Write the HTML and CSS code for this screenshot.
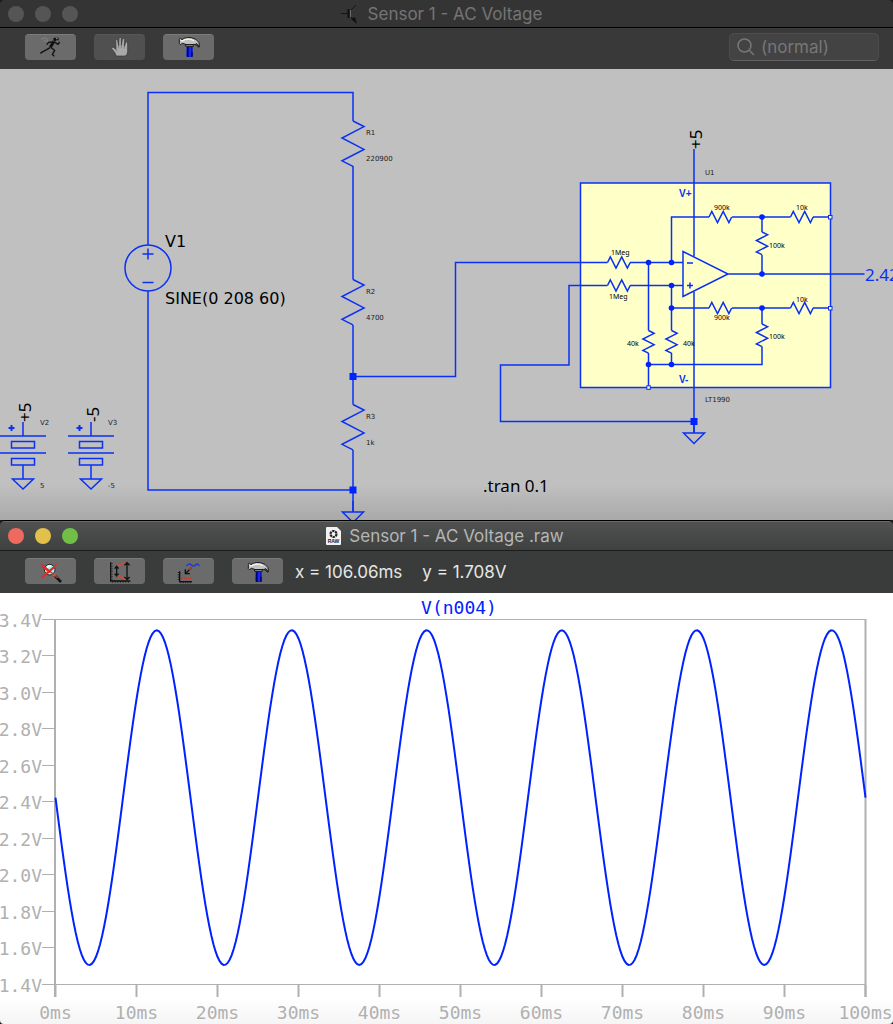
FILE: index.html
```html
<!DOCTYPE html>
<html lang="en">
<head>
<meta charset="utf-8">
<meta name="viewport" content="width=device-width, initial-scale=1">
<title>Sensor 1 - AC Voltage</title>
<link rel="stylesheet" href="styles.css">
</head>
<body>
<svg class="defs" aria-hidden="true">
  <defs>
    <path id="resistor" d="M0 0L11 5.6L-11 17L11 28.4L-11 39.8L0 45.4"/>
    <path id="resistor-s" d="M0 0L5.6 2.8L-5.6 8.5L5.6 14.2L-5.6 19.9L0 22.7"/>
    <path id="resistor-h" d="M0 0L2.8 -5.6L8.5 5.6L14.2 -5.6L19.9 5.6L22.7 0"/>
    <path id="ground" d="M0 -11V0M-10.5 0H10.5L0 10.5Z"/>
    <g id="battery">
      <path d="M0 -14V0M-23 0H23M-11.5 5.5H11.5V12H-11.5ZM-23 17H23M-11.5 22.5H11.5V29H-11.5ZM0 29V43M-10.5 43H10.5L0 53Z"/>
      <path d="M-14.500 -8H-8.500M-11.500 -11V-5" stroke-width="2"/>
    </g>
    <g id="hammer">
      <path d="M23 27H41V57Q41 60 38 60H26Q22 60 22 57Z" fill="#0713d8"/>
      <path d="M26 28V60M39 44V59" stroke="#000466" stroke-width="4"/>
      <path d="M33 30V59" stroke="#2840f5" stroke-width="3"/>
      <path d="M1 7Q1 3 4 4L9 8L16 4Q25 0 37 2Q54 5 60 17L61 30L56 29L51 23L43 22V28H20V22L10 19L4 23L1 20Z" fill="#bfc2bf" stroke="#1b1b1b" stroke-width="3"/>
      <path d="M5 10L10 12L17 8Q31 4 45 11" fill="none" stroke="#f4f4f4" stroke-width="4"/>
      <path d="M18 23H43M51 19L60 29" stroke="#1b1b1b" stroke-width="4"/>
    </g>
  </defs>
</svg>

<main class="desktop">
  <section class="window window-schematic">
    <header class="titlebar">
      <div class="lights"><span class="light"></span><span class="light"></span><span class="light"></span></div>
      <h1 class="title">
        <svg class="title-icon" viewBox="0 0 20 20" aria-hidden="true"><path d="M0 9.500H7M9 7L15 1M9 12L14 17" fill="none" stroke="#141414"/><path d="M7.500 5V14" stroke="#111" stroke-width="2"/><path d="M9.500 6V13" stroke="#6a6a6a"/><path d="M10 15L16 20L14 13Z" fill="#111"/></svg>
        Sensor 1 - AC Voltage
      </h1>
    </header>
    <div class="toolbar">
      <button class="tool" type="button" aria-label="Run">
        <svg class="icon" viewBox="0 0 60 60"><path d="M0 7Q8 0 16 4Q22 7 20 14M8 13Q13 8 17 13" fill="none" stroke="#858585" stroke-width="3"/><path d="M38 2H53V10H46L42 14L37 9Z" fill="#111"/><path d="M45 5H50" stroke="#999" stroke-width="3"/><path d="M39 13L28 31" stroke="#111" stroke-width="9"/><path d="M42 16L51 22L56 15M34 15L23 16L17 23M27 32L17 38L0 47V50M29 31L41 40L34 53L40 58" fill="none" stroke="#111" stroke-width="4"/></svg>
      </button>
      <button class="tool" type="button" aria-label="Halt" disabled>
        <svg class="icon" viewBox="0 0 60 60"><path d="M19 57L14 46L5 35Q4 29 10 31L18 37L17 10Q19 5 23 10L26 26L27 4Q31 -1 34 4V25L37 7Q41 2 44 7L43 28L47 16Q52 12 53 18V44Q53 53 46 57Z" fill="#a9a9a9" stroke="#343434" stroke-width="2"/><path d="M26 25V34M34 25V34M43 27V35M18 37L22 43" fill="none" stroke="#707070" stroke-width="2"/></svg>
      </button>
      <button class="tool" type="button" aria-label="Control panel"><svg class="icon" viewBox="0 0 60 60"><use href="#hammer"/></svg></button>
      <label class="search">
        <svg class="search-icon" viewBox="0 0 18 18" aria-hidden="true"><circle cx="7.500" cy="7.500" r="6.500"/><path d="M12 12L17 17"/></svg>
        <input class="search-field" type="search" placeholder="(normal)" aria-label="Search">
      </label>
    </div>
    <svg class="schematic" viewBox="0 69 893 451" role="img" aria-label="Circuit schematic">
      <defs><linearGradient id="shade" x1="0" y1="0" x2="0" y2="1"><stop offset="0" stop-color="#000" stop-opacity="0"/><stop offset="1" stop-color="#000" stop-opacity=".12"/></linearGradient></defs>
      <rect x="0" y="485" width="893" height="35" fill="url(#shade)"/>
      <g class="wire">
        <path d="M148 245V92.500H353V121M353 166V279.500M353 325V404.500M353 450V512M148 291V490H353M353 376.500H455.500V262.500H580"/>
        <circle cx="148" cy="268" r="23"/>
        <path d="M142.500 254H153.500M148 248.500V259.500M142.500 282.500H153.500"/>
        <use href="#resistor" x="353" y="121"/>
        <use href="#resistor" x="353" y="279.500"/>
        <use href="#resistor" x="353" y="404.500"/>
        <use href="#ground" x="353" y="512"/>
        <use href="#battery" x="23" y="436"/>
        <use href="#battery" x="91" y="436"/>
        <path d="M580 285.500H569V365H500.500V421.500H694"/>
        <use href="#ground" x="694" y="433"/>
      </g>
      <rect class="chip" x="580.500" y="183" width="250" height="204.500"/>
      <g class="wire">
        <path d="M694 149V256.500M694 291.500V433"/>
        <path d="M580 262.500H607.500M630 262.500H683M580 285.500H607.500M630 285.500H683"/>
        <path d="M671.500 262.500V217H709M732 217H790.500M813 217H830M762 217V232M762 255V274"/>
        <path d="M683 251.500L728 274L683 296.500ZM728 274H864.500M687 263H693M687 285.500H693M690 282.500V288.500"/>
        <path d="M648.500 262.500V330.500M648.500 353V387M671.500 285.500V330.500M671.500 353V364.500M671.500 308H709M732 308H790.500M813 308H830M762 308V324M762 346.500V364.500H648.500"/>
        <use href="#resistor-h" x="607.500" y="262.500"/>
        <use href="#resistor-h" x="607.500" y="285.500"/>
        <use href="#resistor-h" x="709" y="217"/>
        <use href="#resistor-h" x="790.500" y="217"/>
        <use href="#resistor-h" x="709" y="308"/>
        <use href="#resistor-h" x="790.500" y="308"/>
        <use href="#resistor-s" x="762" y="232"/>
        <use href="#resistor-s" x="762" y="324"/>
        <use href="#resistor-s" x="648.500" y="330.500"/>
        <use href="#resistor-s" x="671.500" y="330.500"/>
      </g>
      <g class="pin">
        <rect x="828.500" y="215.500" width="3.500" height="3.500"/>
        <rect x="828.500" y="306.500" width="3.500" height="3.500"/>
        <rect x="646.800" y="385.800" width="3.500" height="3.500"/>
      </g>
      <g class="node">
        <rect x="349.500" y="373" width="7" height="7"/>
        <rect x="349.500" y="486.500" width="7" height="7"/>
        <rect x="690.500" y="418" width="7" height="7"/>
        <circle cx="648.500" cy="262.500" r="2.800"/><circle cx="671.500" cy="262.500" r="2.800"/>
        <circle cx="671.500" cy="285.500" r="2.800"/><circle cx="671.500" cy="308" r="2.800"/>
        <circle cx="648.500" cy="364.500" r="2.800"/><circle cx="671.500" cy="364.500" r="2.800"/>
        <circle cx="762" cy="217" r="2.800"/><circle cx="762" cy="274" r="2.800"/><circle cx="762" cy="308" r="2.800"/>
      </g>
      <g class="label">
        <text x="165" y="247">V1</text>
        <text x="165" y="304">SINE(0 208 60)</text>
      </g>
      <g class="label-net">
        <text x="483" y="492">.tran 0.1</text>
        <text transform="translate(702 149) rotate(-90)">+5</text>
        <text transform="translate(31 422) rotate(-90)">+5</text>
        <text transform="translate(99 422) rotate(-90)">-5</text>
        <text x="865" y="281" class="blue">2.42</text>
      </g>
      <g class="label-part">
        <text x="366" y="135">R1</text><text x="366" y="161">220900</text>
        <text x="366" y="294">R2</text><text x="366" y="320">4700</text>
        <text x="366" y="419">R3</text><text x="366" y="445">1k</text>
        <text x="40" y="425">V2</text><text x="40" y="488">5</text>
        <text x="108" y="425">V3</text><text x="108" y="488">-5</text>
        <text x="705" y="175">U1</text><text x="705" y="402">LT1990</text>
      </g>
      <g class="label-value">
        <text x="611" y="255">1Meg</text><text x="609" y="299">1Meg</text>
        <text x="714" y="210">900k</text><text x="714" y="320">900k</text>
        <text x="796" y="210">10k</text><text x="796" y="302">10k</text>
        <text x="769" y="248">100k</text><text x="769" y="339">100k</text>
        <text x="627" y="346">40k</text><text x="683" y="346">40k</text>
      </g>
      <g class="label-supply"><text x="679" y="197">V+</text><text x="679" y="383">V-</text></g>
    </svg>
  </section>

  <section class="window window-plot">
    <header class="titlebar">
      <div class="lights"><span class="light light-close"></span><span class="light light-min"></span><span class="light light-max"></span></div>
      <h2 class="title">
        <svg class="title-icon title-icon-doc" viewBox="0 0 17 20" aria-hidden="true"><path d="M2 1H12L16 5V18Q16 19 15 19H2Q1 19 1 18V2Q1 1 2 1Z" fill="#f2f2f2"/><circle cx="8.500" cy="8" r="3" fill="none" stroke="#222" stroke-width="2.200" stroke-dasharray="2.400 .7"/><text class="doc-type" x="8.500" y="17" text-anchor="middle">RAW</text></svg>
        Sensor 1 - AC Voltage .raw
      </h2>
    </header>
    <div class="toolbar">
      <button class="tool" type="button" aria-label="Zoom to fit">
        <svg class="icon" viewBox="0 0 60 60"><path d="M41 41L60 60" stroke="#111" stroke-width="8"/><path d="M38 37L43 42" stroke="#ddd" stroke-width="5"/><circle cx="26" cy="23" r="16" fill="#a5eef0" stroke="#262626" stroke-width="3"/><path d="M16 26Q17 12 29 12" fill="none" stroke="#fff" stroke-width="4"/><path d="M0 7L9 12L50 48M1 13L28 31M47 7L35 17L1 47M42 15L6 45" fill="none" stroke="#e22a22" stroke-width="4"/></svg>
      </button>
      <button class="tool" type="button" aria-label="Autorange">
        <svg class="icon" viewBox="0 0 60 60"><path d="M2 1V57H61" fill="none" stroke="#111" stroke-width="4"/><path d="M6 3V53M6 60H60" fill="none" stroke="#111" stroke-width="3" stroke-dasharray="3 5"/><path d="M20 12V42M14 20L20 13L26 20M14 35L20 42L26 35M51 2V53M43 10L51 2L59 10M43 45L51 53L59 45" fill="none" stroke="#111" stroke-width="4"/><path d="M23 11L47 1M23 41L47 53" stroke="#e0452c" stroke-width="4"/></svg>
      </button>
      <button class="tool" type="button" aria-label="Add trace">
        <svg class="icon" viewBox="0 0 60 60"><path d="M22 12Q30 2 37 9T50 9T61 12" fill="none" stroke="#1a35d8" stroke-width="4"/><path d="M37 17L19 35M19 22V35H33" fill="none" stroke="#111" stroke-width="4"/><path d="M2 28V59H39" fill="none" stroke="#111" stroke-width="4"/><path d="M-2 30V57M4 62H38" stroke="#111" stroke-width="3" stroke-dasharray="3 4"/><path d="M6 52Q13 43 20 49T39 46M30 23L37 17" fill="none" stroke="#d23a2c" stroke-width="4"/></svg>
      </button>
      <button class="tool" type="button" aria-label="Control panel"><svg class="icon" viewBox="0 0 60 60"><use href="#hammer"/></svg></button>
      <p class="readout"><span>x = 106.06ms</span><span>y = 1.708V</span></p>
    </div>
    <svg class="plot" viewBox="0 593 893 431" role="img" aria-label="V(n004) against time">
      <text class="trace-name" x="459" y="614" text-anchor="middle">V(n004)</text>
      <g class="axes"><path d="M42 619.500H866M42 984.500H866"/><path d="M55 619V997M865.500 619V997" class="axis-bold"/></g>
      <g id="scale" class="scale"></g>
      <path id="trace" class="trace"/>
    </svg>
  </section>
</main>
<script src="script.js"></script>
</body>
</html>
```

FILE: styles.css
```css
* { box-sizing: border-box; }

body {
  margin: 0;
  background: #1c1c1c;
  font-family: Inter, "Liberation Sans", sans-serif;
}

.defs { position: absolute; width: 0; height: 0; }

.desktop { display: flex; flex-direction: column; }

.window { overflow: hidden; }
.window-schematic { background: #393939; border-radius: 5px 5px 0 0; }
.window-plot { background: #3a3c3b; border-top: 1px solid #000; border-radius: 5px 5px 4px 4px; }

.titlebar {
  display: grid;
  grid-template-columns: 1fr auto 1fr;
  align-items: center;
  height: 28px;
  padding: 0 18px 0 8px;
  background: #343434;
  border-bottom: 1px solid #000;
}
.window-plot .titlebar {
  height: 30px;
  padding-right: 12px;
  background: linear-gradient(#505251, #3f4140);
  border-top: 1px solid #6a6c6b;
  border-bottom-color: #1c1c1c;
}

.lights { display: flex; gap: 11px; }
.light { width: 16px; height: 16px; border-radius: 50%; background: #555; }
.light-close { background: #ee6a5f; }
.light-min { background: #e1c04c; }
.light-max { background: #71bf46; }

.title {
  display: flex;
  align-items: center;
  gap: 7px;
  margin: 0;
  color: #747474;
  font-size: 17px;
  font-weight: 400;
  line-height: 24px;
  white-space: nowrap;
}
.window-plot .title { color: #b5b6b5; }
.title-icon { width: 20px; height: 20px; }
.title-icon-doc { width: 17px; }
.doc-type { font: 700 5px "Liberation Sans", sans-serif; fill: #222; }

.toolbar {
  display: flex;
  align-items: center;
  gap: 18px;
  height: 41px;
  padding: 0 14px 0 25px;
}
.window-schematic .toolbar { padding-bottom: 4px; }
.window-plot .toolbar { height: 42px; }
.window-plot .tool { margin-bottom: 2px; }

.tool {
  display: flex;
  align-items: center;
  justify-content: center;
  width: 51px;
  height: 26px;
  padding: 0;
  border: 0;
  border-top: 1px solid #7b7b7b;
  border-radius: 4px;
  background: #6b6b6b;
}
.tool:disabled { background: #505050; border-top-color: #565656; }
.icon { width: 20px; height: 20px; overflow: visible; }

.search {
  display: flex;
  align-items: center;
  gap: 6px;
  width: 150px;
  height: 28px;
  margin-left: auto;
  padding: 0 7px;
  border: 1px solid #4d4d4d;
  border-bottom-color: #626262;
  border-radius: 5px;
  background: #434343;
}
.search-icon { flex: none; width: 18px; height: 18px; fill: none; stroke: #777; stroke-width: 1.5px; }
.search-field {
  width: 100%;
  min-width: 0;
  padding: 0;
  border: 0;
  outline: 0;
  background: transparent;
  color: #777;
  font: 400 17px Inter, "Liberation Sans", sans-serif;
}
.search-field::placeholder { color: #777; opacity: 1; }

.readout {
  display: flex;
  gap: 20px;
  margin: 0 0 0 -6px;
  color: #e6e6e6;
  font-size: 17px;
  font-weight: 400;
  white-space: nowrap;
}

.schematic { display: block; width: 100%; height: auto; background: #c0c0c0; }
.wire { fill: none; stroke: #0a30f5; stroke-width: 1.5px; }
.chip { fill: #ffffc8; stroke: #0a30f5; stroke-width: 1.5px; }
.pin { fill: #ffffc8; stroke: #0a30f5; stroke-width: 1px; }
.node { fill: #0022ff; }

.label { font: 16px "DejaVu Sans", sans-serif; }
.label-net { font: 17px "Noto Sans", sans-serif; }
.blue { fill: #0a30f5; }
.label-part { font: 7px "DejaVu Sans", sans-serif; fill: #222; }
.label-value { font: 7px "Noto Sans", sans-serif; }
.label-supply { font: 700 10px "Liberation Sans", sans-serif; fill: #0a30f5; }

.plot {
  display: block;
  width: 100%;
  height: auto;
  background: linear-gradient(#fff 94%, #f5f5f5);
  font: 18px "DejaVu Sans Mono", monospace;
}
.trace-name { fill: #0022ff; }
.axes, .scale { stroke: #b0b0b0; fill: none; stroke-width: 1px; }
.axis-bold, .scale-time path { stroke-width: 2px; }
.scale text { fill: #b0b0b0; stroke: none; }
.trace { fill: none; stroke: #0022ff; stroke-width: 2px; }
```

FILE: script.js
```js
const NS = "http://www.w3.org/2000/svg";
const plot = { left: 55.5, right: 865.5, top: 619.5, bottom: 984.5 };
const volts = { min: 1.4, max: 3.4, step: 0.2 };
const wave = { offset: 2.424, amplitude: 0.917, cycles: 6 };

const toY = (v) => plot.bottom - ((v - volts.min) / (volts.max - volts.min)) * (plot.bottom - plot.top);
const toX = (ms) => plot.left + (ms / 100) * (plot.right - plot.left);

function add(parent, name, attrs, text) {
  const el = document.createElementNS(NS, name);
  Object.entries(attrs).forEach(([key, value]) => el.setAttribute(key, value));
  if (text) el.textContent = text;
  parent.appendChild(el);
  return el;
}

const scale = document.getElementById("scale");
for (let i = 0; i <= 10; i++) {
  const v = volts.min + i * volts.step;
  add(scale, "path", { d: `M42 ${Math.round(toY(v)) - 0.5}H55` });
  add(scale, "text", { x: 42, y: Math.round(toY(v)) + 7, "text-anchor": "end" }, `${v.toFixed(1)}V`);
}

const time = add(scale, "g", { class: "scale-time" });
for (let ms = 0; ms <= 100; ms += 10) {
  add(time, "path", { d: `M${toX(ms)} 985V997` });
  add(time, "text", { x: toX(ms), y: 1019, "text-anchor": "middle" }, `${ms}ms`);
}

const points = [];
for (let ms = 0; ms <= 100; ms += 0.25) {
  const v = wave.offset - wave.amplitude * Math.sin((2 * Math.PI * wave.cycles * ms) / 100);
  points.push(`${toX(ms).toFixed(2)} ${toY(v).toFixed(2)}`);
}
document.getElementById("trace").setAttribute("d", `M${points.join("L")}`);
```
